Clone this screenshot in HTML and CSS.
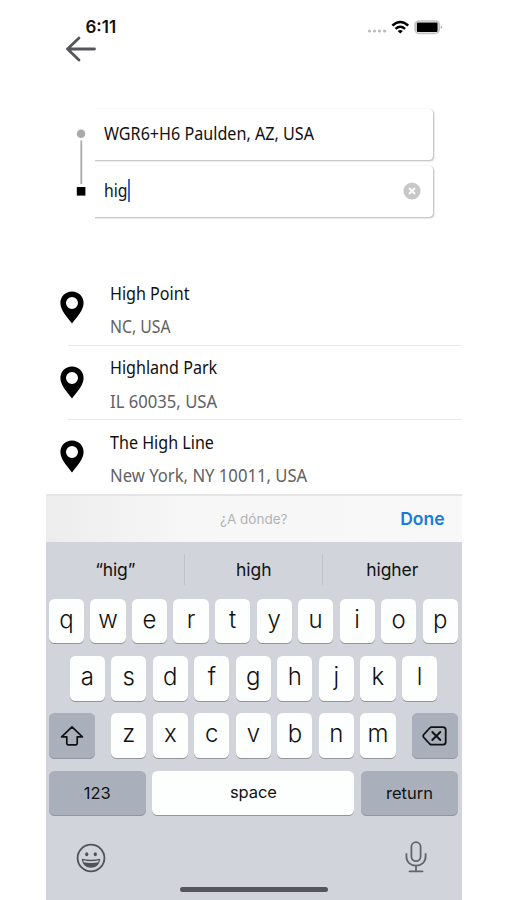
FILE: index.html
```html
<!DOCTYPE html>
<html lang="en">
<head>
<meta charset="utf-8">
<title>Destination search</title>
<link rel="stylesheet" href="styles.css">
</head>
<body>
<main class="phone">
  <header class="top">
    <div class="status">
      <span class="time">6:11</span>
      <svg class="signals" width="76" height="16" viewBox="0 0 76 16">
        <g fill="#bbb"><circle cx="2.5" cy="11" r="1.6"/><circle cx="7.5" cy="11" r="1.6"/><circle cx="12.5" cy="11" r="1.6"/><circle cx="17.6" cy="11" r="1.6"/></g>
        <g fill="none" stroke="#000" stroke-width="2.5"><path d="M25.400 5.700q7.900-7.400 15.800 0"/><path d="M28.500 8.900q4.800-4.200 9.600 0"/></g>
        <path d="M30.700 10.900q2.600-2 5.200 0l-2.600 2.700z"/>
        <rect x="48.100" y="1" width="24.100" height="12.400" rx="4" fill="#fff" stroke="#c3c3c3" stroke-width="1.700"/>
        <rect x="49.800" y="2.500" width="20.800" height="9.400" rx="1.200"/>
        <path d="M73.800 5.200q2.400 2 0 4z" fill="#aaa"/>
      </svg>
    </div>
    <svg class="back" width="32" height="26" viewBox="0 0 32 26"><path d="M14 2 2.500 13 14 24M2.500 13H29.500" fill="none" stroke="#55565a" stroke-width="2.800" stroke-linecap="round" stroke-linejoin="round"/></svg>
  </header>

  <section class="trip">
    <svg class="route" width="10" height="68" viewBox="0 0 10 68"><circle cx="5" cy="4.800" r="4.300" fill="#aaa"/><path d="M5.300 11.500V55" stroke="#aaa" stroke-width="1.800"/><path d="M.8 58h8.600v8.600H.8z"/></svg>
    <div class="fields">
      <div class="field"><span class="txt from">WGR6+H6 Paulden, AZ, USA</span></div>
      <div class="field"><span class="txt">hig</span><i class="caret"></i>
        <svg class="clear" width="18" height="18" viewBox="0 0 18 18"><circle cx="9" cy="9" r="8.600" fill="#c8c8c8"/><path d="m6 6 6 6m0-6-6 6" stroke="#fff" stroke-width="1.800"/></svg>
      </div>
    </div>
  </section>

  <section class="results">
    <div class="result">
      <svg class="pin" width="24" height="33" viewBox="0 0 24 33"><path fill-rule="evenodd" d="M12 .5C5.400.5.400 5.500.400 12c0 7 6.600 14.200 11.600 20.500C17 26.200 23.600 19 23.600 12 23.600 5.500 18.600.5 12 .5Zm0 5.600a6 6 0 1 1 0 12 6 6 0 0 1 0-12Z"/></svg>
      <div class="place"><b class="txt name">High Point</b><span class="txt sub">NC, USA</span></div>
    </div>
    <div class="result">
      <svg class="pin" width="24" height="33" viewBox="0 0 24 33"><path fill-rule="evenodd" d="M12 .5C5.400.5.400 5.500.400 12c0 7 6.600 14.200 11.600 20.500C17 26.200 23.600 19 23.600 12 23.600 5.500 18.600.5 12 .5Zm0 5.600a6 6 0 1 1 0 12 6 6 0 0 1 0-12Z"/></svg>
      <div class="place"><b class="txt name">Highland Park</b><span class="txt sub zip">IL 60035, USA</span></div>
    </div>
    <div class="result">
      <svg class="pin" width="24" height="33" viewBox="0 0 24 33"><path fill-rule="evenodd" d="M12 .5C5.400.5.400 5.500.400 12c0 7 6.600 14.200 11.600 20.500C17 26.200 23.600 19 23.600 12 23.600 5.500 18.600.5 12 .5Zm0 5.600a6 6 0 1 1 0 12 6 6 0 0 1 0-12Z"/></svg>
      <div class="place"><b class="txt name">The High Line</b><span class="txt sub zip">New York, NY 10011, USA</span></div>
    </div>
  </section>

  <div class="toolbar"><span></span><span class="hint">¿A dónde?</span><span class="done">Done</span></div>

  <section class="keyboard">
    <div class="suggest"><span>“hig”</span><span>high</span><span>higher</span></div>
    <div class="keys">
      <div class="row"><kbd>q</kbd><kbd>w</kbd><kbd>e</kbd><kbd>r</kbd><kbd>t</kbd><kbd>y</kbd><kbd>u</kbd><kbd>i</kbd><kbd>o</kbd><kbd>p</kbd></div>
      <div class="row"><kbd>a</kbd><kbd>s</kbd><kbd>d</kbd><kbd>f</kbd><kbd>g</kbd><kbd>h</kbd><kbd>j</kbd><kbd>k</kbd><kbd>l</kbd></div>
      <div class="row spread">
        <kbd class="dark mod"><svg width="24" height="22" viewBox="0 0 24 22"><path d="M12 1.800 1.600 11.800H6.800V18.600Q6.800 19.800 8 19.800H16Q17.200 19.800 17.200 18.600V11.800H22.400Z" fill="none" stroke="#111" stroke-width="1.700" stroke-linejoin="round"/></svg></kbd>
        <div class="row"><kbd>z</kbd><kbd>x</kbd><kbd>c</kbd><kbd>v</kbd><kbd>b</kbd><kbd>n</kbd><kbd>m</kbd></div>
        <kbd class="dark mod"><svg width="25" height="20" viewBox="0 0 25 20"><path d="M9.500 1.200H21Q23.700 1.200 23.700 3.900V16Q23.700 18.700 21 18.700H9.500Q8.500 18.700 7.800 18L1.800 11.500Q.6 10 1.800 8.500L7.800 2Q8.500 1.200 9.500 1.200Z" fill="none" stroke="#111" stroke-width="1.800"/><path d="m10.300 6 8 8m0-8-8 8" stroke="#111" stroke-width="1.900" stroke-linecap="round"/></svg></kbd>
      </div>
      <div class="row spread"><kbd class="dark wide">123</kbd><kbd class="space">space</kbd><kbd class="dark wide">return</kbd></div>
    </div>
    <div class="bottom">
      <svg width="30" height="30" viewBox="0 0 30 30"><circle cx="15" cy="15" r="13.400" fill="none" stroke="#505359" stroke-width="1.800"/><ellipse cx="10.700" cy="11.200" rx="1.600" ry="2" fill="#505359"/><ellipse cx="19.300" cy="11.200" rx="1.600" ry="2" fill="#505359"/><path d="M5.800 15.700Q15 18 24.200 15.700C23.900 21.500 19.700 24.700 15 24.700S6.100 21.500 5.800 15.700Z" fill="#505359"/><path d="M7.300 17.300Q15 19 22.700 17.300L22.200 19.300Q15 20.800 7.800 19.300Z" fill="#d1d4db"/></svg>
      <svg width="22" height="32" viewBox="0 0 22 32"><g fill="none" stroke="#62656c" stroke-width="1.800" stroke-linecap="round"><rect x="6.400" y="1.200" width="9.200" height="19" rx="4.600"/><path d="M1.400 13V15.500C1.400 21 5.500 24.700 11 24.700S20.600 21 20.600 15.500V13M11 24.700V30.300M4.500 30.300H17.500"/></g></svg>
    </div>
    <div class="home"></div>
  </section>
</main>
</body>
</html>
```
FILE: styles.css
```css
* { box-sizing: border-box; }
body { margin: 0; background: #fff; font-family: Inter, "Liberation Sans", sans-serif; color: #111; }
svg { display: block; flex: none; }
.phone { width: 415.5px; height: 900px; margin-left: 46px; display: flex; flex-direction: column; overflow: hidden; }
.top { height: 108.500px; padding-top: 18px; flex: none; }
.status { display: flex; justify-content: space-between; height: 18px; padding: 0 19px 0 39.500px; }
.time { font-size: 17px; font-weight: 600; line-height: 19px; }
.signals { margin-top: 2px; }
.back { margin: 0 0 0 19px; }

.trip { display: flex; height: 164.500px; padding-left: 30px; flex: none; }
.route { margin-top: 20.500px; }
.fields { display: flex; flex-direction: column; gap: 5.500px; width: 347px; }
.field { height: 51.500px; display: flex; align-items: center; padding: 0 12px 2px 18px; border-radius: 4px; background: #fff; clip-path: inset(-2px -4px -4px 9px); box-shadow: 1px 1px 2px rgba(0,0,0,.27), 0 0 1px rgba(0,0,0,.2); }
.txt { font-family: "Noto Sans", sans-serif; font-size: 17.500px; line-height: 24px; font-weight: 400; white-space: nowrap; transform: scaleX(.9); transform-origin: left; }
.from { transform: scaleX(.922); }
.name { transform: scaleX(.92); }
.caret { width: 2px; height: 23px; background: #4a63c8; margin-left: -2.500px; }
.clear { margin: 2px 0 0 auto; }

.results { height: 221px; flex: none; overflow: hidden; }
.result { display: flex; height: 74.600px; padding: 7.500px 0 0 14px; background: linear-gradient(#e9e9e9, #e9e9e9) 22px 71.500px / 100% 1px no-repeat; }
.pin { margin-top: 10.500px; }
.place { display: flex; flex-direction: column; gap: 9.500px; margin-left: 25.500px; }
.sub { color: #626262; }
.zip { transform: scaleX(.952); }

.toolbar { height: 48px; flex: none; display: grid; grid-template-columns: 1fr 1fr 1fr; align-items: center; border-top: 2px solid #e5e5e6; background: linear-gradient(90deg, #ededed, #f7f7f8 35%, #f8f8f9); }
.hint { text-align: center; color: #b2b2b4; font-size: 13.500px; padding-bottom: 1px; }
.done { text-align: right; padding: 0 17px 1px 0; color: #187bdc; font-size: 17.500px; font-weight: 600; }

.keyboard { flex: 1; background: #d1d4da; }
.suggest { display: grid; grid-template-columns: repeat(3, 1fr); height: 56.500px; padding-top: 12px; }
.suggest span { text-align: center; font-size: 17.500px; line-height: 31px; height: 31px; letter-spacing: -.1px; }
.suggest span + span { border-left: 1px solid #c0c3c9; }
.suggest span:nth-child(n+2) { margin-left: -1px; }
.keys { display: flex; flex-direction: column; gap: 12.700px; padding: 0 3.500px 0 2.700px; }
.row { display: flex; justify-content: center; gap: 6.350px; }
.spread { justify-content: space-between; }
kbd { width: 35.200px; height: 44.700px; border-radius: 5.500px; background: #fdfefe; box-shadow: 0 1px 0 #92959b; display: flex; justify-content: center; align-items: center; padding-bottom: 2.500px; font: 350 24px/30px Inter, sans-serif; }
.dark { background: #a9b0bb; padding-bottom: 0; }
.mod { width: 46.500px; padding-top: 1px; }
.wide { width: 97px; font-size: 16.500px; font-weight: 400; padding-top: 1px; }
.space { width: 202px; font-size: 16.500px; font-weight: 400; padding-bottom: 1px; letter-spacing: -.1px; }
.bottom { display: flex; justify-content: space-between; padding: 27.500px 34.500px 0 30px; }
.bottom svg:last-child { margin-top: -2px; }
.home { width: 148px; height: 5px; border-radius: 3px; background: #55565b; margin: 14px auto 0; }
```
